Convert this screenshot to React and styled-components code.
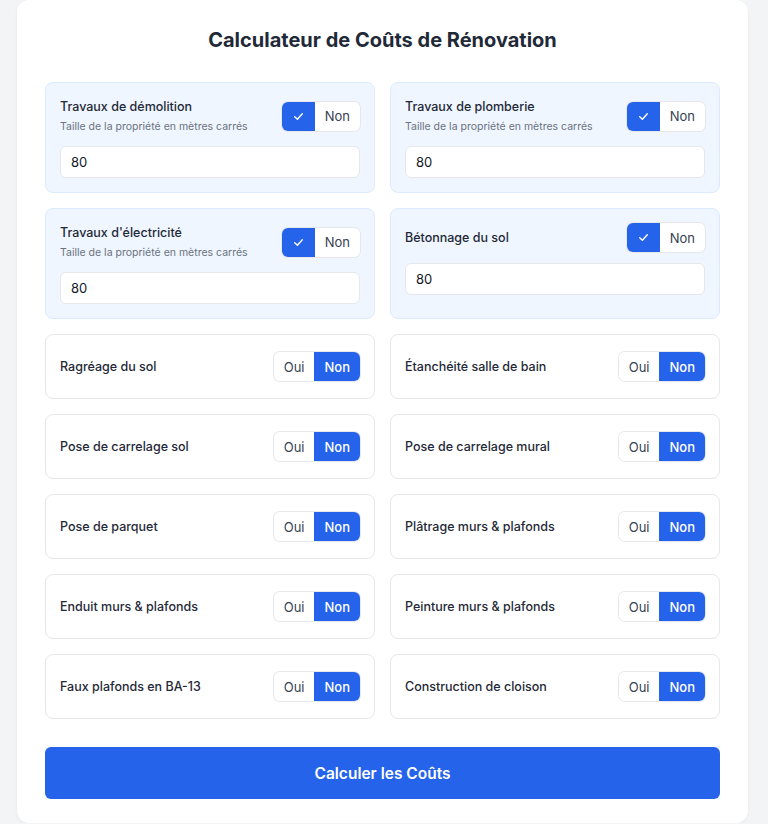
import React, { useState } from "react";
import styled, { createGlobalStyle } from "styled-components";

const GlobalStyle = createGlobalStyle`
  body {
    margin: 0;
    background-color: #f3f4f6;
    font-family: Inter, "Noto Sans", sans-serif;
    color: #1f2937;
  }
`;

const Card = styled.div`
  box-sizing: border-box;
  width: 731px;
  margin-left: 17px;
  background-color: #fff;
  border-radius: 12px;
  box-shadow: 0 1px 3px rgba(0, 0, 0, 0.06);
  padding: 26px 28px 24px;
`;

const Title = styled.h1`
  margin: 0 0 28px;
  font-size: 20px;
  line-height: 28px;
  font-weight: 700;
  text-align: center;
  color: #1f2937;
`;

const Grid = styled.div`
  display: grid;
  grid-template-columns: 1fr 1fr;
  gap: 15px;
`;

const Cell = styled.div`
  box-sizing: border-box;
  border-radius: 8px;
  border: 1px solid ${(p) => (p.$active ? "#dbeafe" : "#e5e7eb")};
  background-color: ${(p) => (p.$active ? "#eff6ff" : "#fff")};
  padding: ${(p) => (p.$active ? "14px 14px" : "17px 14px")};
  display: flex;
  flex-direction: column;
`;

const Head = styled.div`
  display: flex;
  align-items: center;
  justify-content: space-between;
  min-height: 29px;
`;

const Label = styled.div`
  font-size: 12.5px;
  line-height: 20px;
  font-weight: 500;
  color: #1f2937;
`;

const Sub = styled.div`
  margin-top: 2px;
  font-size: 10.5px;
  line-height: 16px;
  color: #6b7280;
`;

const Toggle = styled.div`
  display: flex;
  border-radius: 6px;
  overflow: hidden;
  box-shadow: 0 0 0 1px #e5e7eb;
`;

const Opt = styled.button`
  height: 29px;
  border: none;
  padding: 0 10px;
  font-family: inherit;
  font-size: 13px;
  display: flex;
  align-items: center;
  justify-content: center;
  background-color: ${(p) => (p.$on ? "#2563eb" : "#fff")};
  color: ${(p) => (p.$on ? "#fff" : "#374151")};
  font-weight: ${(p) => (p.$on ? 500 : 400)};
  cursor: pointer;
`;

const Input = styled.input`
  box-sizing: border-box;
  margin-top: 11px;
  width: 100%;
  height: 32px;
  border: 1px solid #e5e7eb;
  border-radius: 6px;
  background-color: #fff;
  padding: 0 10px;
  font-family: inherit;
  font-size: 13px;
  color: #111827;
  outline: none;
`;

const Submit = styled.button`
  margin-top: 28px;
  width: 100%;
  height: 52px;
  border: none;
  border-radius: 6px;
  background-color: #2563eb;
  color: #fff;
  font-family: inherit;
  font-size: 15.5px;
  font-weight: 600;
  cursor: pointer;
`;

const Check = () => (
  <svg width="13" height="13" viewBox="0 0 12 12" fill="none">
    <polyline
      points="2.5,6.3 5,8.6 9.5,3.4"
      stroke="#fff"
      strokeWidth="1.3"
      strokeLinecap="round"
      strokeLinejoin="round"
    />
  </svg>
);

const items = [
  { name: "Travaux de démolition", on: true, sub: true },
  { name: "Travaux de plomberie", on: true, sub: true },
  { name: "Travaux d'électricité", on: true, sub: true },
  { name: "Bétonnage du sol", on: true },
  { name: "Ragréage du sol" },
  { name: "Étanchéité salle de bain" },
  { name: "Pose de carrelage sol" },
  { name: "Pose de carrelage mural" },
  { name: "Pose de parquet" },
  { name: "Plâtrage murs & plafonds" },
  { name: "Enduit murs & plafonds" },
  { name: "Peinture murs & plafonds" },
  { name: "Faux plafonds en BA-13" },
  { name: "Construction de cloison" },
];

const Item = ({ item }) => {
  const [on, setOn] = useState(!!item.on);
  return (
    <Cell $active={on}>
      <Head>
        <div>
          <Label>{item.name}</Label>
          {on && item.sub && <Sub>Taille de la propriété en mètres carrés</Sub>}
        </div>
        <Toggle>
          <Opt $on={on} onClick={() => setOn(true)}>
            {on ? <Check /> : "Oui"}
          </Opt>
          <Opt $on={!on} onClick={() => setOn(false)}>
            Non
          </Opt>
        </Toggle>
      </Head>
      {on && <Input defaultValue="80" />}
    </Cell>
  );
};

const App = () => {
  return (
    <>
      <GlobalStyle />
      <Card>
        <Title>Calculateur de Coûts de Rénovation</Title>
        <Grid>
          {items.map((it) => (
            <Item key={it.name} item={it} />
          ))}
        </Grid>
        <Submit>Calculer les Coûts</Submit>
      </Card>
    </>
  );
};

export default App;
